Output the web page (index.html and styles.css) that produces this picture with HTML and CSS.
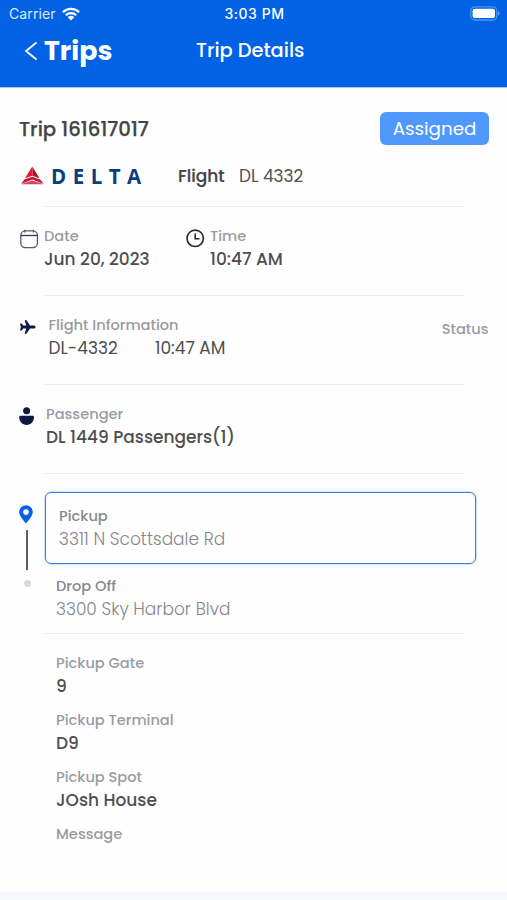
FILE: index.html
```html
<!DOCTYPE html>
<html lang="en">
<head>
<meta charset="utf-8">
<title>Trip Details</title>
<link rel="stylesheet" href="styles.css">
</head>
<body>
<header class="header">
  <div class="statusbar">
    <div class="carrier"><span class="t-carrier">Carrier</span>
      <svg class="wifi" width="18" height="14" viewBox="0 0 18 14"><g fill="none" stroke="#fff" stroke-width="2.2"><path d="M.9 5.2a11.5 11.5 0 0 1 16.2 0"/><path d="M3.8 8.2a7.4 7.4 0 0 1 10.4 0"/></g><path d="M5.7 10.2a4.7 4.7 0 0 1 6.6 0L9 13.6z" fill="#fff"/></svg>
    </div>
    <span class="t-clock">3:03 PM</span>
    <svg class="battery" width="31" height="15" viewBox="0 0 31 15"><rect x="1.8" y=".8" width="26" height="13.2" rx="4" fill="none" stroke="#4f93f2" stroke-width="1.3"/><rect x="3.6" y="2.7" width="22.400" height="9.4" rx="2.2" fill="#fff"/><path d="M29 5.2v4.4c2-.8 2-3.6 0-4.4z" fill="#6ca5f5"/></svg>
  </div>
  <nav class="nav">
    <div class="back"><svg width="13" height="20" viewBox="0 0 13 20"><path d="M12.500 1.500 2 10l10.500 8.500" fill="none" stroke="#fff" stroke-width="1.800"/></svg><span class="t-back">Trips</span></div>
    <h1 class="t-title">Trip Details</h1>
  </nav>
</header>
<main>
  <section class="trip">
    <h2 class="t-trip">Trip 161617017</h2>
    <span class="badge">Assigned</span>
  </section>
  <section class="airline">
    <svg class="delta-mark" width="25" height="19" viewBox="0 0 25 19"><path d="M11.300.5 18.500 12.300 11.300 9.800z" fill="#a8142d"/><path d="M11.300.5 4 12.300l7.300-2.500z" fill="#e0183a"/><path d="M3.300 13.400 11.300 10.800l8 2.600 3.300 4.600-11.300-4.500L.2 18z" fill="#c01a35"/><path d="M.2 18.300l11.100-3.900 11.300 3.900z" fill="#d4445a"/></svg>
    <span class="t-delta">DELTA</span>
    <span class="t-flight">Flight</span>
    <span class="t-number">DL 4332</span>
  </section>
  <hr>
  <section class="row">
    <svg class="ico cal" width="20" height="20" viewBox="0 0 20 20"><g fill="none" stroke="#555b76" stroke-width="1.300"><rect x=".8" y="1.800" width="16.600" height="16.800" rx="4.500"/><path d="M.8 6.500h16.600" stroke="#2f3658"/><path d="M4.800.8v2.600M13.400.8v2.600"/></g></svg>
    <div class="pair date"><span class="label">Date</span><span class="value">Jun 20, 2023</span></div>
    <svg class="ico clock" width="20" height="20" viewBox="0 0 20 20"><g fill="none" stroke="#26282f" stroke-width="1.600"><circle cx="9.200" cy="9.300" r="8.200"/><path d="M9.200 4.500V9.800h4.300"/></g></svg>
    <div class="pair"><span class="label">Time</span><span class="value">10:47 AM</span></div>
  </section>
  <hr>
  <section class="row">
    <svg class="ico plane" width="17" height="16" viewBox="0 0 17 16"><path d="M5.600 1.200h1.900l3.500 5.200h3.500c1.200 0 2 .7 2 1.600s-.8 1.600-2 1.600H11l-3.500 5.200H5.600l1.700-5.200H4.200l-1.500 1.900H1L1.900 8 1 4.500h1.700l1.500 1.900h3.100z" fill="#0d1a42"/></svg>
    <div class="pair"><span class="label">Flight Information</span><div class="flightline"><span class="value regular flight-code">DL-4332</span><span class="value regular">10:47 AM</span></div></div>
    <span class="label status">Status</span>
  </section>
  <hr>
  <section class="row">
    <svg class="ico person" width="16" height="19" viewBox="0 0 16 19"><circle cx="7.600" cy="3.700" r="3.500" fill="#0d1a42"/><path d="M1.500 8.800h12.200c.8 0 1.300.5 1.300 1.300 0 4.800-3.300 7.900-7.400 7.900S.2 14.900.2 10.100c0-.8.5-1.300 1.300-1.300z" fill="#0d1a42"/></svg>
    <div class="pair"><span class="label">Passenger</span><span class="value">DL 1449 Passengers(1)</span></div>
  </section>
  <hr>
  <section class="route">
    <div class="track">
      <svg width="14" height="19" viewBox="0 0 14 19"><path fill-rule="evenodd" d="M7 .3A6.800 6.800 0 0 1 13.800 7.100C13.800 11 9.500 15.500 7 18.500 4.500 15.500.2 11 .2 7.100A6.800 6.800 0 0 1 7 .3zM7 4.300a2.800 2.800 0 1 0 0 5.600 2.800 2.800 0 0 0 0-5.600z" fill="#0562e8"/></svg>
      <i class="line"></i><i class="dot"></i>
    </div>
    <div class="stops">
      <div class="pickup"><span class="label strong">Pickup</span><span class="value light">3311 N Scottsdale Rd</span></div>
      <div class="dropoff"><span class="label strong">Drop Off</span><span class="value light">3300 Sky Harbor Blvd</span></div>
    </div>
  </section>
  <hr>
  <section class="details">
    <div class="pair"><span class="label">Pickup Gate</span><span class="value">9</span></div>
    <div class="pair"><span class="label">Pickup Terminal</span><span class="value">D9</span></div>
    <div class="pair"><span class="label">Pickup Spot</span><span class="value">JOsh House</span></div>
    <div class="pair"><span class="label">Message</span></div>
  </section>
</main>
<footer class="footer"></footer>
</body>
</html>
```
FILE: styles.css
```css
* { box-sizing: border-box; }
body { margin: 0; width: 507px; height: 900px; overflow: hidden; display: flex; flex-direction: column; background: #fefefe; color: #444; font-family: Poppins, Inter, sans-serif; white-space: nowrap; }
h1, h2 { margin: 0; font-weight: 500; }
svg { display: block; flex: none; }
.header { height: 88px; background: #0162e6; color: #fff; border-bottom: 1px solid #a5c7f5; flex: none; }
.statusbar { height: 27px; padding: 0 7px 0 9px; display: grid; grid-template-columns: 1fr auto 1fr; align-items: center; font-family: Inter, sans-serif; font-size: 14px; }
.carrier { display: flex; align-items: center; gap: 6px; }
.t-carrier { color: #dceaff; letter-spacing: .1px; }
.t-clock { font-weight: 500; letter-spacing: .55px; }
.battery { justify-self: end; }
.nav { height: 48px; display: grid; grid-template-columns: 196px auto; align-items: center; }
.back { display: flex; align-items: center; gap: 7px; padding-left: 24px; }
.t-back { font-size: 26.8px; font-weight: 700; line-height: 36px; }
.t-title { font-size: 19.4px; line-height: 28px; }
main { flex: none; height: 804px; }
hr { width: 420px; height: 1px; margin: 0 0 0 44px; border: 0; background: #ececed; }
.trip { margin: 24px 18px 0 19px; height: 33px; display: flex; justify-content: space-between; align-items: center; }
.t-trip { font-size: 19.7px; font-weight: 500; -webkit-text-stroke: .25px #444; }
.badge { width: 109px; height: 33px; border-radius: 6px; background: #5099fc; color: #fff; display: flex; align-items: center; justify-content: center; font-size: 18.3px; }
.airline { height: 61px; padding-left: 21px; display: flex; align-items: center; font-size: 17px; }
.t-delta { font-family: "Open Sans", sans-serif; font-size: 20.5px; font-weight: 700; color: #0b3f7c; width: 132px; padding-left: 5px; letter-spacing: 6.5px; }
.t-flight { font-weight: 500; width: 61px; -webkit-text-stroke: .2px #444; }
.t-number { color: #555; }
.row { display: flex; padding-left: 20px; height: 88px; padding-top: 18px; }
.ico { margin-right: 4px; }
.cal, .clock { margin-top: 4px; }
.pair, .pickup, .dropoff { display: flex; flex-direction: column; align-items: flex-start; }
.label { font-size: 14.6px; line-height: 23px; font-weight: 500; color: #989ca1; }
.value { font-size: 17px; line-height: 22px; font-weight: 500; color: #4e4e4e; }
.value.regular { font-weight: 400; }
.value.light { font-weight: 300; color: #85878b; }
.label.strong { color: #85888e; }
.date { width: 142px; }
.plane { margin: 5px 12.5px 0 -1px; }
.flightline { display: flex; }
.flight-code { width: 106.5px; }
.status { margin: 4px 18.500px 0 auto; }
.person { margin: 4px 11px 0 -1px; }
.route { height: 159px; display: flex; padding: 18px 0 0 19px; }
.track { width: 26px; padding-top: 13px; display: flex; flex-direction: column; }
.line { width: 2px; height: 40px; margin: 6px 0 0 7px; background: #5b6070; }
.dot { width: 7px; height: 7px; border-radius: 50%; margin: 10px 0 0 5px; background: #d9d9db; }
.pickup { width: 431px; height: 72px; border: 1px solid #3b7de2; border-radius: 6px; padding: 12px 0 0 13px; box-shadow: 0 0 0 .5px #9dc0f3; }
.dropoff { padding: 11px 0 0 11px; }
.details { padding: 18px 0 0 56px; display: flex; flex-direction: column; gap: 12px; }
.footer { height: 8px; background: #f7f8fb; flex: none; }
```
